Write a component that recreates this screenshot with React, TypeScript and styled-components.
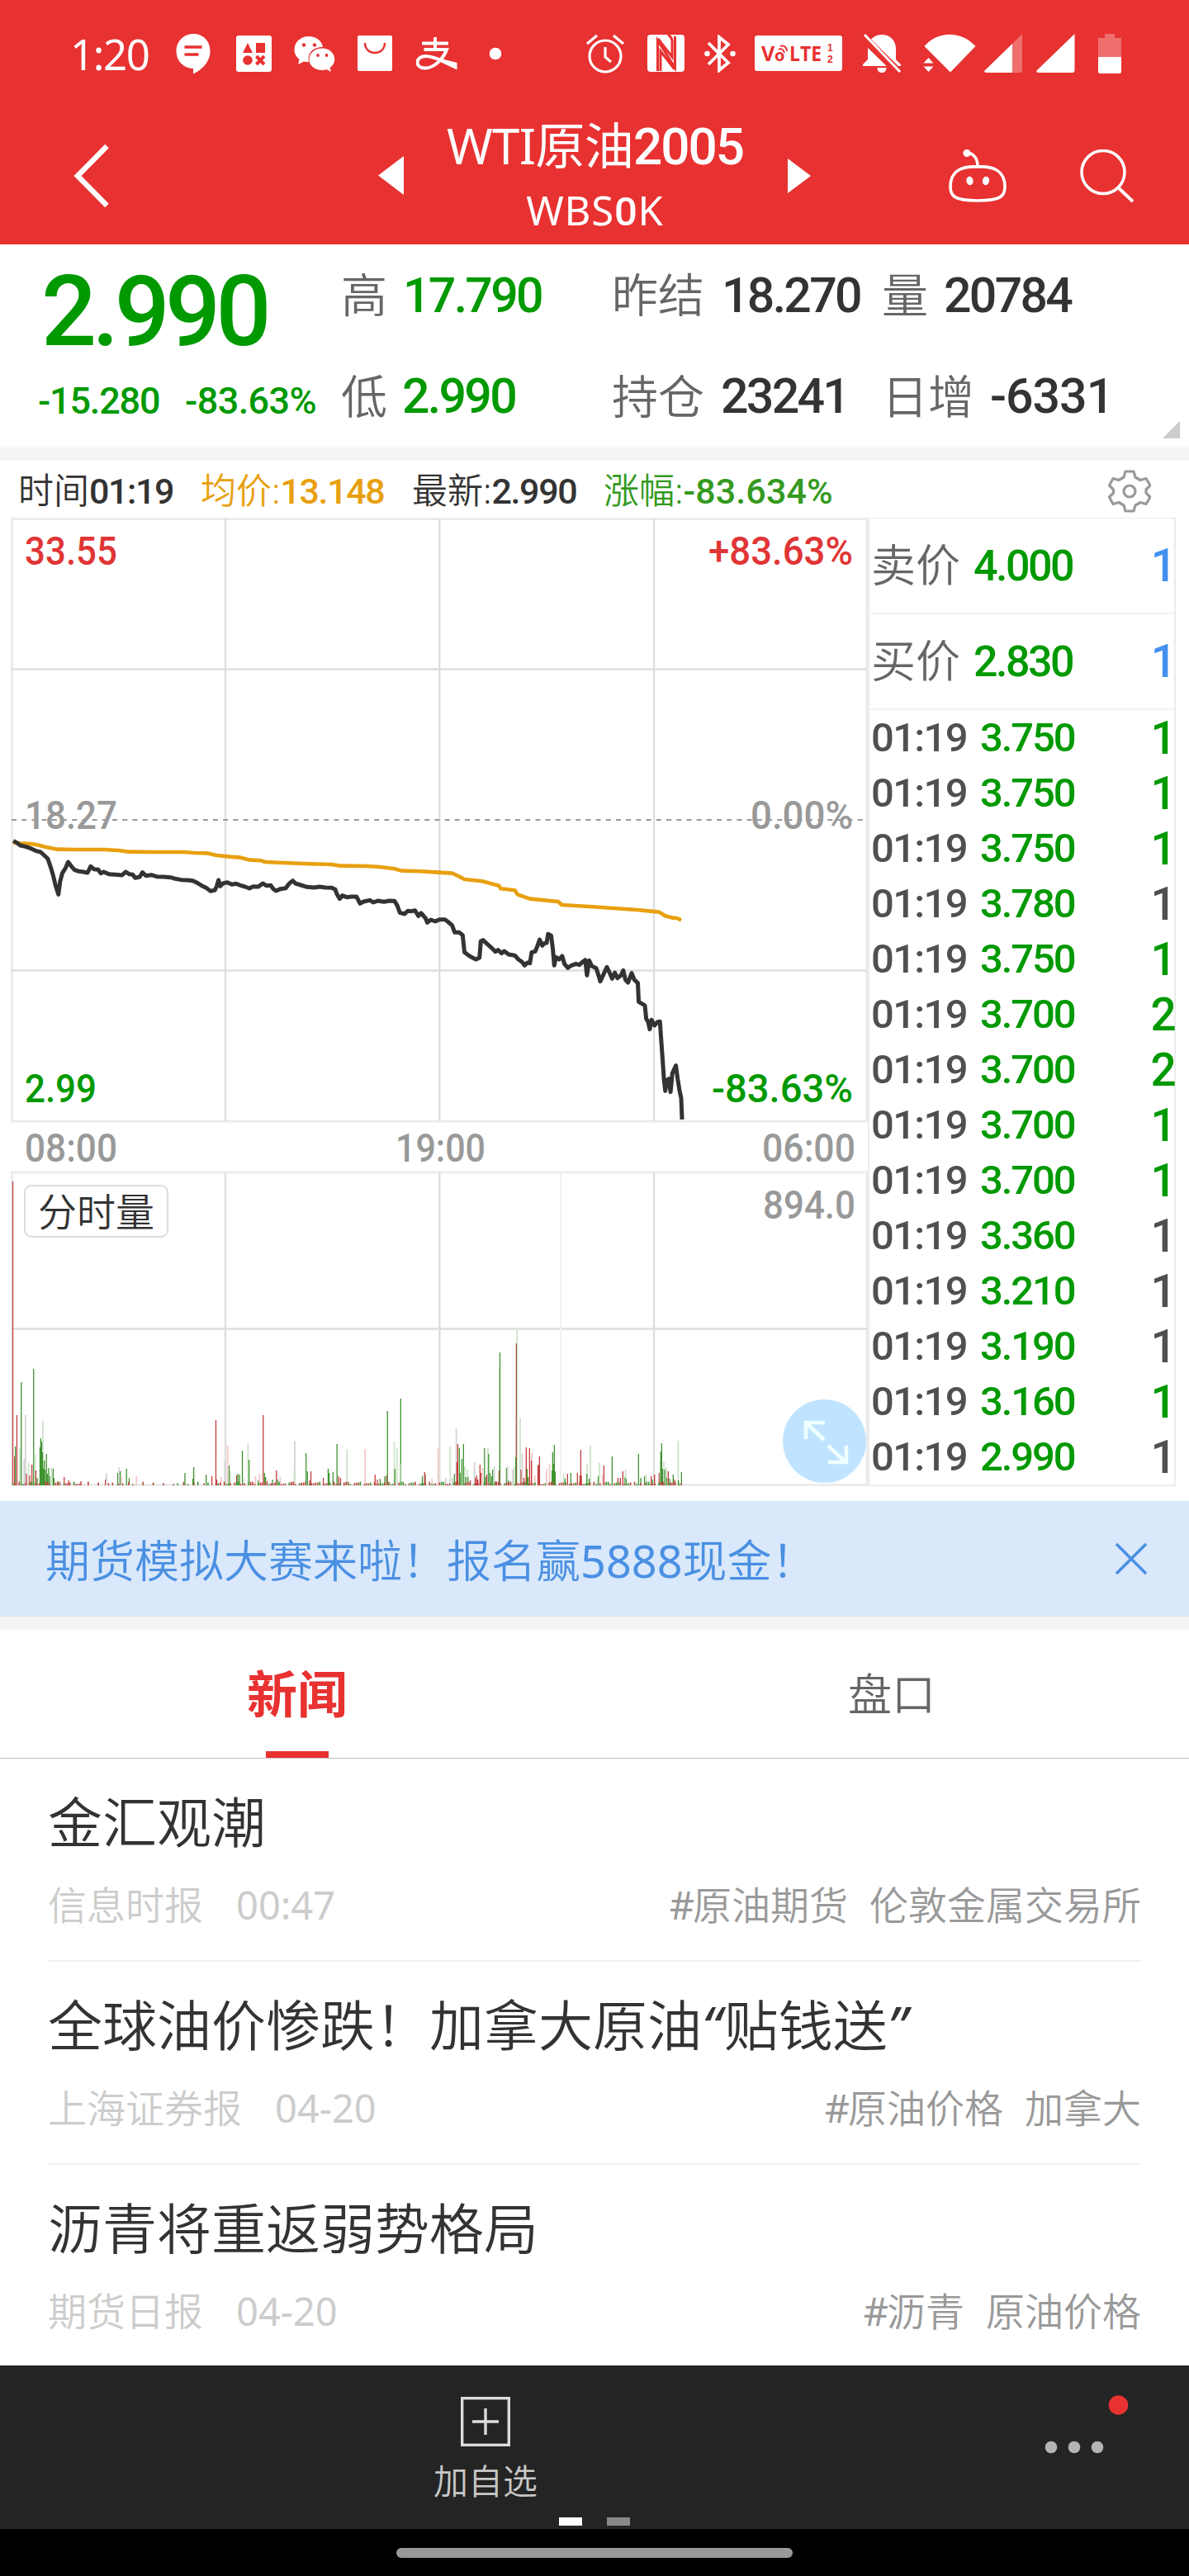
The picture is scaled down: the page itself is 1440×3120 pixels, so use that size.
import React from "react";
import styled, { createGlobalStyle } from "styled-components";

const GREEN = "#009900";
const RED = "#e83131";
const CJK = '"Noto Sans", "Noto Sans CJK SC", sans-serif';
const DIGITS = 'Roboto, "Noto Sans CJK SC", sans-serif';

const GlobalStyle = createGlobalStyle`
  * { box-sizing: border-box; }
  body { margin: 0; background: #fff; }
  svg { display: block; }
`;

const Screen = styled.div`
  width: 1440px;
  height: 3120px;
  overflow: hidden;
  display: flex;
  flex-direction: column;
  background: #fff;
  font-family: ${CJK};
  font-weight: 350;
  color: #333;
  white-space: nowrap;
`;

/* ---------- header ---------- */

const Header = styled.header`
  height: 296px;
  background: ${RED};
  color: #fff;
`;

const StatusBar = styled.div`
  height: 129px;
  padding-left: 85px;
  display: flex;
  align-items: center;
`;

const Clock = styled.span`
  width: 128px;
  font-family: "Noto Sans", sans-serif;
  font-weight: 400;
  font-size: 51px;
  letter-spacing: -1.4px;
`;

const StatusIcon = styled.svg<{ $gap: number }>`
  flex: none;
  margin-right: ${(p) => p.$gap}px;
`;

const TitleBar = styled.div`
  height: 167px;
  display: grid;
  grid-template-columns: 458px 524px 158px 233px;
  align-items: center;
`;

const BackIcon = styled.svg`
  margin-left: 86px;
`;

const Switcher = styled.div`
  display: flex;
  align-items: center;
  justify-content: space-between;
`;

const Titles = styled.div`
  display: flex;
  flex-direction: column;
  align-items: center;
  margin: 1px 2px 0 0;
`;

const Title = styled.h1`
  margin: 0;
  font-family: ${CJK};
  font-weight: 400;
  font-size: 60px;
  line-height: 82px;
  letter-spacing: -0.7px;
`;

const TitleDigits = styled.span`
  font-family: ${DIGITS};
  font-weight: 500;
  font-size: 62px;
  letter-spacing: -2px;
`;

const Symbol = styled.div`
  font-family: ${CJK};
  font-weight: 400;
  font-size: 49px;
  line-height: 70px;
  letter-spacing: 0.8px;
`;

const SymbolDigit = styled.span`
  font-family: ${DIGITS};
  font-weight: 500;
`;

const HeaderAction = styled.div`
  display: flex;
  justify-content: flex-end;
  padding-top: 3px;
`;

/* ---------- quote ---------- */

const Quote = styled.section`
  position: relative;
  height: 246px;
  display: flex;
`;

const LastPrice = styled.div`
  width: 413px;
  padding-left: 46px;
  color: ${GREEN};
  font-family: ${DIGITS};
  font-weight: 500;
`;

const Big = styled.div`
  padding-left: 4px;
  font-size: 118px;
  line-height: 165px;
  letter-spacing: -5.6px;
`;

const Change = styled.div`
  display: flex;
  font-size: 45px;
  line-height: 50px;
  letter-spacing: -1.2px;
`;

const ChangeCell = styled.span<{ $w: number }>`
  width: ${(p) => p.$w}px;
  &:last-child { letter-spacing: -0.6px; }
`;

const Stats = styled.div`
  display: grid;
  grid-template-columns: 328px 327px 340px;
  grid-template-rows: 122px 123px;
`;

const Stat = styled.div`
  display: flex;
  align-items: center;
`;

const StatLabel = styled.span<{ $w: number }>`
  width: ${(p) => p.$w}px;
  color: #666;
  font-size: 56px;
  line-height: 80px;
  padding-bottom: 2px;
`;

const StatValue = styled.span<{ $green?: boolean; $tracking?: number }>`
  font-family: ${DIGITS};
  font-weight: 500;
  font-size: 59px;
  letter-spacing: ${(p) => p.$tracking ?? -2.7}px;
  color: ${(p) => (p.$green ? GREEN : "#333")};
`;

const ExpandCorner = styled.svg`
  position: absolute;
  right: 11px;
  bottom: 11px;
`;

const Spacer = styled.div<{ $h: number }>`
  height: ${(p) => p.$h}px;
  background: #f4f4f4;
`;

/* ---------- chart ---------- */

const InfoRow = styled.div`
  height: 69px;
  padding: 0 46px 0 22px;
  display: flex;
  align-items: center;
  font-size: 43px;
  line-height: 62px;
`;

const Info = styled.span<{ $w: number; $color: string }>`
  width: ${(p) => p.$w}px;
  margin-top: 4px;
  color: ${(p) => p.$color};
`;

const InfoNum = styled.span<{ $tracking?: number }>`
  font-family: ${DIGITS};
  font-weight: 500;
  letter-spacing: ${(p) => p.$tracking ?? -1.4}px;
`;

const Gear = styled.svg`
  margin: 4px 0 0 auto;
`;

const Market = styled.section`
  height: 1191px;
  padding-left: 13px;
  display: flex;
  align-items: flex-start;
`;

const ChartArea = styled.div`
  position: relative;
  width: 1038px;
  height: 1173px;
`;

const ChartText = styled.text`
  font-family: ${DIGITS};
  font-weight: 500;
  font-size: 48px;
`;

const VolumeButton = styled.button`
  position: absolute;
  left: 16px;
  top: 808px;
  width: 175px;
  height: 64px;
  padding: 0;
  border: 2px solid #ddd;
  border-radius: 9px;
  background: #fff;
  color: #333;
  font: 350 47px/60px ${CJK};
`;

const FullscreenButton = styled.div`
  position: absolute;
  left: 935px;
  top: 1068px;
  width: 101px;
  height: 101px;
  border-radius: 50%;
  background: #c0e4ff;
`;

const Tape = styled.div`
  width: 373px;
  height: 1173px;
  border: 1px solid #ececec;
  border-width: 1px 2px 2px 2px;
  font-family: ${DIGITS};
  font-weight: 500;
`;

const BookRow = styled.div`
  height: 116px;
  padding-left: 2px;
  display: flex;
  align-items: center;
  border-bottom: 2px solid #f2f2f2;
`;

const BookLabel = styled.span`
  width: 124px;
  padding-bottom: 2px;
  font-family: ${CJK};
  font-weight: 350;
  font-size: 54px;
  line-height: 80px;
  color: #666;
`;

const BookPrice = styled.span`
  font-size: 52px;
  letter-spacing: -2.5px;
  color: ${GREEN};
`;

const Lots = styled.span<{ $color: string }>`
  margin: 0 -3px 0 auto;
  font-size: 55px;
  color: ${(p) => p.$color};
`;

const TradeRow = styled.div`
  height: 67px;
  padding: 0 2px 0 2px;
  display: flex;
  align-items: center;
  font-size: 49px;
  letter-spacing: -1.7px;
`;

const TradeTime = styled.span`
  width: 132px;
  color: #505050;
`;

const TradePrice = styled.span`
  color: ${GREEN};
  letter-spacing: -2.1px;
`;

/* ---------- banner, tabs, news ---------- */

const Latin = styled.span`
  font-weight: 400;
`;

const QuoteMark = styled.span`
  font-weight: 400;
  font-style: italic;
  letter-spacing: 3px;
`;

const Hash = styled.span`
  font-weight: 400;
  letter-spacing: -2px;
`;

const Banner = styled.div`
  height: 140px;
  padding: 0 50px 0 55px;
  display: flex;
  align-items: center;
  justify-content: space-between;
  background: #d9e8fb;
  color: #4a90e2;
  font-size: 54px;
`;

const BannerText = styled.span`
  line-height: 80px;
  padding-top: 3px;
`;

const Tabs = styled.nav`
  height: 156px;
  display: grid;
  grid-template-columns: 1fr 1fr;
  border-bottom: 1px solid #c0c0c0;
`;

const Tab = styled.div<{ $active?: boolean }>`
  display: flex;
  flex-direction: column;
  align-items: center;
  justify-content: space-between;
  font-size: ${(p) => (p.$active ? 61 : 53)}px;
  font-weight: ${(p) => (p.$active ? 700 : 350)};
  color: ${(p) => (p.$active ? RED : "#666")};
  line-height: 156px;
  &::after {
    content: "";
    width: 76px;
    height: 8px;
    margin-top: -9px;
    background: ${(p) => (p.$active ? RED : "transparent")};
  }
`;

const NewsList = styled.div`
  height: 735px;
  padding: 0 58px;
`;

const NewsItem = styled.article`
  height: 246px;
  padding-top: 28px;
  border-bottom: 2px solid #f0f0f0;
  &:last-child { border-bottom: 0; }
`;

const NewsTitle = styled.h2`
  margin: 0;
  font-size: 66px;
  font-weight: 350;
  line-height: 96px;
  color: #333;
`;

const NewsMeta = styled.div`
  display: flex;
  font-size: 47px;
  line-height: 66px;
  margin-top: 20px;
  color: #ccc;
`;

const NewsTime = styled(Latin)`
  margin-left: 40px;
`;

const NewsTags = styled.span`
  margin-left: auto;
  display: flex;
  gap: 26px;
  color: #999;
`;

/* ---------- bottom ---------- */

const BottomBar = styled.footer`
  height: 198px;
  background: #242424;
`;

const BottomItems = styled.div`
  height: 184px;
  display: grid;
  grid-template-columns: 1176px 248px;
`;

const AddItem = styled.div`
  display: flex;
  flex-direction: column;
  align-items: center;
  padding-top: 38px;
  font-size: 42px;
  line-height: 60px;
  color: #c8c8c8;
`;

const AddLabel = styled.span`
  margin-top: 12px;
`;

const MoreIcon = styled.svg`
  margin: 30px 0 0 88px;
`;

const Pages = styled.div`
  display: flex;
  justify-content: center;
  gap: 30px;
`;

const Page = styled.span<{ $on?: boolean }>`
  width: 28px;
  height: 10px;
  background: ${(p) => (p.$on ? "#fff" : "#888")};
`;

const HomeArea = styled.div`
  height: 57px;
  padding-top: 23px;
  background: #000;
`;

const HomeBar = styled.div`
  width: 480px;
  height: 12px;
  margin: 0 auto;
  border-radius: 6px;
  background: #999;
`;

/* ---------- data ---------- */

const trades: [string, string, boolean][] = [
  ["3.750", "1", true],
  ["3.750", "1", true],
  ["3.750", "1", true],
  ["3.780", "1", false],
  ["3.750", "1", true],
  ["3.700", "2", true],
  ["3.700", "2", true],
  ["3.700", "1", true],
  ["3.700", "1", true],
  ["3.360", "1", false],
  ["3.210", "1", false],
  ["3.190", "1", false],
  ["3.160", "1", true],
  ["2.990", "1", false],
];

const news = [
  { title: "金汇观潮", source: "信息时报", time: "00:47", tags: ["#原油期货", "伦敦金属交易所"] },
  { title: "全球油价惨跌！加拿大原油“贴钱送”", source: "上海证券报", time: "04-20", tags: ["#原油价格", "加拿大"] },
  { title: "沥青将重返弱势格局", source: "期货日报", time: "04-20", tags: ["#沥青", "原油价格"] },
];

const volumeColors: Record<string, string> = {
  r: "#c43c3c",
  g: "#3f9430",
  G: "#cde3c9",
  R: "#f3c9c9",
  k: "#d4d4d4",
  b: "#a85440",
};

/* x, height, colour key */
const volumes: [number, number, string][] = [
  [15.5, 368, "r"], [17.7, 35, "r"], [18.6, 47, "g"], [20.4, 85, "r"], [23.6, 45, "G"], [25.7, 125, "g"],
  [28.9, 32, "k"], [30.5, 85, "k"], [32, 14, "r"], [34.3, 28, "G"], [36, 12, "r"], [38.6, 25, "r"], [40.7, 141, "g"],
  [42.2, 38, "G"], [43.4, 18, "r"], [45, 9, "g"], [48.4, 46, "g"], [49.3, 57, "g"], [50.4, 53, "g"], [51.6, 78, "G"],
  [51.4, 40, "g"], [52.4, 20, "g"], [53.6, 30, "g"], [54.8, 19, "g"], [56.2, 38, "g"], [57.4, 14, "g"], [58.9, 21, "g"],
  [60, 11, "g"], [62.1, 22, "G"], [64.3, 20, "g"], [65.3, 9, "g"], [70, 5, "g"], [77.7, 10, "r"], [83, 6, "r"],
  [98, 5, "r"], [127.6, 7, "r"], [128.6, 15, "k"], [142.5, 15, "g"], [144, 22, "k"], [145.7, 17, "g"], [147, 9, "R"],
  [153.2, 20, "g"], [156.4, 9, "g"], [165, 11, "R"], [223.9, 15, "g"], [234.6, 22, "g"], [233.6, 8, "g"],
  [249.6, 13, "g"], [256.6, 11, "r"], [261.4, 79, "r"], [262.4, 7, "r"], [267.5, 10, "R"], [272.1, 29, "k"],
  [275.3, 48, "R"], [277.5, 24, "g"], [278.6, 17, "G"], [286.6, 12, "r"], [287.9, 14, "g"], [290, 13, "g"],
  [293.5, 42, "g"], [295, 8, "G"], [300, 51, "G"], [301.6, 31, "g"], [309, 11, "R"], [312.6, 6, "g"], [314, 14, "R"],
  [318.7, 85, "r"], [320.3, 15, "g"], [321.6, 10, "g"], [323.4, 5, "r"], [330, 7, "g"], [334.8, 18, "r"],
  [336, 7, "g"], [339, 10, "R"], [356.7, 54, "k"], [356.2, 21, "G"], [370.6, 39, "g"], [372.3, 17, "g"],
  [375, 6, "r"], [376.5, 17, "r"], [391.5, 9, "r"], [397.4, 20, "g"], [398.6, 15, "g"], [403.3, 16, "g"],
  [408.1, 50, "g"], [410, 11, "r"], [412.4, 9, "r"], [419.9, 44, "G"], [441.9, 44, "R"], [454.2, 13, "r"],
  [457, 7, "r"], [460.4, 8, "g"], [466, 11, "g"], [469.2, 90, "g"], [468.2, 12, "b"], [477.2, 53, "G"],
  [478.3, 20, "g"], [480.5, 45, "G"], [485.3, 105, "g"], [484.3, 26, "G"], [511.5, 11, "g"], [514.2, 16, "r"],
  [515, 13, "b"], [523, 8, "R"], [530.3, 45, "R"], [539.5, 9, "k"], [545, 47, "G"], [547.7, 9, "k"], [550.3, 14, "g"],
  [552.3, 69, "k"], [553.3, 28, "r"], [554.3, 50, "r"], [556.3, 45, "g"], [557.3, 15, "g"], [559.3, 32, "g"],
  [561.3, 50, "g"], [562.7, 23, "G"], [564, 10, "g"], [565.7, 19, "G"], [566.7, 10, "g"], [569.5, 6, "r"],
  [574.3, 28, "k"], [575.6, 9, "r"], [577.3, 12, "r"], [578.6, 7, "r"], [581.3, 25, "r"], [582.3, 15, "r"],
  [584, 21, "R"], [586.7, 45, "g"], [588, 10, "g"], [590.7, 45, "G"], [589.5, 13, "r"], [591.7, 38, "g"],
  [593.4, 15, "g"], [595.3, 11, "g"], [596.7, 19, "g"], [598.3, 23, "k"], [600.4, 5, "r"], [604.6, 143, "G"],
  [605.4, 161, "g"], [604.4, 18, "b"], [613.3, 21, "g"], [614.4, 23, "k"], [616, 6, "g"], [620.7, 19, "k"],
  [622.3, 22, "G"], [626, 189, "G"], [625.3, 172, "b"], [624.6, 34, "g"], [629.7, 82, "G"], [631, 19, "r"],
  [632.3, 39, "k"], [634.5, 9, "r"], [636.6, 23, "R"], [637.3, 46, "r"], [638.3, 20, "g"], [639.5, 10, "g"],
  [641.3, 45, "r"], [643.7, 39, "R"], [643.5, 30, "r"], [647.5, 12, "R"], [651.5, 24, "r"], [652.3, 25, "r"],
  [653.3, 35, "r"], [661.7, 20, "R"], [665.3, 26, "R"], [668.6, 18, "g"], [669.3, 40, "g"], [670.3, 26, "g"],
  [671.3, 49, "g"], [672.4, 17, "g"], [682.3, 14, "G"], [684.3, 8, "g"], [687.3, 14, "r"], [691.3, 15, "g"],
  [699.3, 15, "r"], [702.4, 12, "b"], [703.3, 43, "r"], [704, 12, "r"], [711, 26, "G"], [710.6, 14, "g"],
  [714.7, 48, "G"], [713.5, 8, "g"], [724.5, 11, "g"], [725.7, 27, "G"], [729.4, 13, "R"], [731.3, 24, "r"],
  [741.3, 35, "g"], [748.3, 9, "r"], [751.3, 9, "r"], [754.3, 17, "r"], [756.6, 10, "g"], [757.3, 19, "G"],
  [758.3, 8, "g"], [773.3, 38, "g"], [776, 9, "g"], [780.5, 11, "g"], [782, 13, "G"], [788.7, 11, "r"],
  [790, 7, "g"], [792.7, 13, "r"], [798.3, 15, "r"], [799.4, 30, "G"], [800.3, 41, "g"], [801.3, 51, "g"],
  [802.3, 20, "g"], [803.7, 28, "G"], [805, 19, "g"], [806.7, 22, "G"], [807.5, 9, "g"], [809.3, 17, "r"],
  [811, 8, "g"], [815.3, 13, "g"], [817, 7, "r"], [821, 54, "G"], [821.6, 6, "g"], [825.3, 16, "g"],
];

/* low-volume minutes: thin ticks along the baseline */
const ticks = Array.from({ length: 330 }, (_, i) => {
  const n = (i * 7919 + 13) % 101;
  const x = 15 + i * 2.46;
  const quiet = x > 100 && x < 262;
  return { x, h: 1.6 + (n % 4) * 0.9, c: n % 3 === 0 ? "r" : n % 3 === 1 ? "g" : "b", on: quiet ? n < 30 : n < 82 };
}).filter((t) => t.on);

const priceLine =
  "30,175 38,182 46,192 58,196 70,203 82,212 92,216 100,228 108,240 114,268 120,300 126,340 132,370 136,322 141,292 148,275 154,252 160,265 168,280 178,286 188,288 198,291 205,268 212,278 222,280 228,293 234,288 246,296 260,298 276,300 284,288 292,296 300,298 306,310 316,306 322,290 330,302 342,299 354,305 370,306 386,308 396,313 410,317 424,318 436,320 446,328 456,338 466,346 476,358 486,354 490,340 494,318 498,340 504,330 514,326 524,334 534,331 544,337 554,342 564,348 572,341 584,342 594,330 602,338 612,337 618,350 624,357 634,350 646,347 654,330 662,320 668,330 680,336 694,343 710,345 722,342 736,345 750,346 758,352 762,370 768,386 774,374 784,380 794,378 806,378 814,403 822,396 836,391 844,399 854,393 868,397 880,393 892,394 898,410 904,436 914,441 922,430 930,431 938,428 946,448 952,438 962,456 966,472 974,462 984,468 994,461 1006,461 1014,471 1022,482 1028,508 1038,508 1046,518 1050,580 1058,590 1066,598 1076,606 1084,600 1087,540 1092,536 1100,548 1110,562 1120,578 1126,572 1134,584 1140,576 1150,588 1164,592 1172,606 1180,615 1186,628 1192,618 1198,620 1202,580 1210,577 1214,562 1220,534 1226,556 1230,548 1236,546 1239,514 1246,520 1250,570 1253,628 1257,598 1264,606 1271,594 1276,622 1284,637 1292,628 1302,622 1310,626 1318,614 1323,608 1327,664 1332,610 1338,630 1348,638 1354,668 1357,686 1364,662 1372,634 1378,654 1384,676 1390,654 1396,674 1404,664 1409,646 1414,680 1420,690 1428,656 1434,680 1442,692 1444,760 1452,768 1458,774 1461,822 1465,832 1469,860 1473,826 1480,846 1486,834 1492,832 1494,880 1498,970 1501,1040 1504,1084 1508,1046 1512,1040 1516,1088 1520,1020 1524,1006 1528,992 1532,1040 1536,1080 1540,1110 1542,1188";

const averageLine =
  "30,182 46,184 70,186 84,190 104,198 130,206 170,207 236,207 268,210 292,215 350,216 414,216 440,219 468,220 490,228 520,233 544,236 566,245 590,247 600,252 640,255 700,259 750,261 770,266 830,267 858,270 890,276 908,284 950,286 990,290 1022,293 1036,303 1050,315 1090,322 1128,338 1132,349 1164,355 1170,370 1198,386 1262,396 1270,408 1340,415 1440,426 1490,434 1504,448 1520,455 1530,456 1540,463";

const Label = (p: { x: number; y: number; w: number; fill: string; children: string }) => (
  <ChartText x={p.x} y={p.y} textLength={p.w} lengthAdjust="spacingAndGlyphs" fill={p.fill}>
    {p.children}
  </ChartText>
);

/* sets Latin digits, hashes and curly quotes apart from the Chinese text around them */
function mixed(text: string) {
  return text.split(/([0-9]+|[“”#])/).map((part, i) => {
    if (/^[0-9]/.test(part)) return <Latin key={i}>{part}</Latin>;
    if (part === "#") return <Hash key={i}>{part}</Hash>;
    if (part === "“" || part === "”") return <QuoteMark key={i}>{part}</QuoteMark>;
    return part;
  });
}

function Chart() {
  return (
    <svg width="1038" height="1173" viewBox="13 627 1038 1173">
      <g stroke="#ececec" strokeWidth="3">
        <path d="M13 628.5H1051M13 1358H1051M13 1420H1051M13 1798.5H1051" />
        <path d="M14.5 628V1358M1050 628V1358M14.5 1420V1799M1050 1420V1799" />
      </g>
      <g stroke="#dedede" strokeWidth="2.400">
        <path d="M14 810.5H1050M14 1175.5H1050M14 1609.5H1050" />
        <path d="M273 628V1358M532.3 628V1358M792 628V1358M273 1420V1799M532.3 1420V1799M792 1420V1799" />
        <path d="M679 1420V1799" stroke="#f1f1f1" strokeWidth="2" />
      </g>
      <path d="M14 993H1050" stroke="#999" strokeWidth="2" strokeDasharray="6 6.2" />
      <Label x={30} y={684} w={112} fill="#e03535">33.55</Label>
      <Label x={858} y={684} w={175} fill="#e03535">+83.63%</Label>
      <Label x={30} y={1004} w={112} fill="#999">18.27</Label>
      <Label x={909} y={1004} w={124} fill="#999">0.00%</Label>
      <Label x={30} y={1335} w={87} fill={GREEN}>2.99</Label>
      <Label x={862} y={1335} w={171} fill={GREEN}>-83.63%</Label>
      <Label x={30} y={1407} w={112} fill="#999">08:00</Label>
      <Label x={479} y={1407} w={109} fill="#999">19:00</Label>
      <Label x={923} y={1407} w={113} fill="#999">06:00</Label>
      <Label x={924} y={1476} w={112} fill="#999">894.0</Label>
      <g transform="translate(0 960) scale(0.5357 0.3333)" fill="none" strokeLinejoin="round">
        <polyline points={averageLine} stroke="#e8a010" strokeWidth="4.600" vectorEffect="non-scaling-stroke" />
        <polyline points={priceLine} stroke="#333" strokeWidth="5" vectorEffect="non-scaling-stroke" />
      </g>
      <g>
        {volumes.map(([x, h, c], i) => (
          <rect key={i} x={x - 0.6} y={1799 - h} width={c === "k" || c === "G" || c === "R" ? 1.8 : 1.3} height={h} fill={volumeColors[c]} />
        ))}
        {ticks.map((t, i) => (
          <rect key={i} x={t.x} y={1799 - t.h} width="1.6" height={t.h} fill={volumeColors[t.c]} />
        ))}
      </g>
    </svg>
  );
}

function StatusIcons() {
  return (
    <>
      <StatusIcon $gap={31} width="42" height="50" viewBox="0 0 42 50">
        <path fill="#fff" d="M21 1C9.500 1 .5 10 .5 22S9 42.500 21 43v6.500C31 45 41.500 35 41.500 22S32.500 1 21 1Z" />
        <path stroke={RED} strokeWidth="3.600" d="M10.500 17h21M10.500 26h17" />
      </StatusIcon>
      <StatusIcon $gap={27} width="43" height="44" viewBox="0 0 43 44">
        <rect width="43" height="44" rx="3" fill="#fff" />
        <path fill={RED} d="M14 9l6 12H8zM24 9h11v12H24z" />
        <circle cx="14" cy="30" r="5.800" fill={RED} />
        <path stroke={RED} strokeWidth="4" d="M24.500 25l9.500 10M34 25l-9.500 10" />
      </StatusIcon>
      <StatusIcon $gap={27} width="50" height="44" viewBox="0 0 50 44">
        <path fill="#fff" d="M18 1C8 1 .5 8 .5 17c0 5 2.500 9 6 12l-1.500 6 7-3.500c2 .6 4 .8 6 .8C16 21 23 14 35 14 33.500 6 26.500 1 18 1Z" />
        <path fill="#fff" d="M34 15.500c-9 0-15.500 6-15.500 13.500S25 42 34 42c2 0 4-.4 5.500-1l5.500 3-1.500-5c3.500-2.500 5.800-6 5.800-10C49.300 21.500 43 15.500 34 15.500Z" />
        <g fill={RED}>
          <circle cx="12" cy="11.500" r="2.200" /><circle cx="25" cy="11.500" r="2.200" />
          <circle cx="29" cy="24" r="1.900" /><circle cx="39.500" cy="24" r="1.900" />
        </g>
      </StatusIcon>
      <StatusIcon $gap={29} width="42" height="43" viewBox="0 0 42 43">
        <rect width="42" height="43" rx="2" fill="#fff" />
        <path fill="none" stroke={RED} strokeWidth="2.400" d="M9 9c0 7 5 12 12 12s12-5 12-12" />
      </StatusIcon>
      <StatusIcon $gap={38} width="50" height="42" viewBox="0 0 50 42">
        <path fill="none" stroke="#fff" strokeWidth="4" d="M7 8.500h32M23 1v14M9.500 16H37C33 27 22 38.500 11 38.500c-6 0-9.500-3-9.500-7 0-4 4-7.500 10-7.500C20 24 30 29 41 33" />
        <path fill="#fff" d="M30 27L49.500 32v8.500L27 30z" />
      </StatusIcon>
      <StatusIcon $gap={101} width="16" height="16" viewBox="0 0 16 16">
        <circle cx="8" cy="8" r="7.300" fill="#fff" />
      </StatusIcon>
      <StatusIcon $gap={27} width="48" height="48" viewBox="0 0 48 48" fill="none" stroke="#fff" strokeWidth="3.200">
        <circle cx="24" cy="27" r="19" />
        <path d="M2 12L14 2M46 12L34 2M24 16v12l7 6" />
      </StatusIcon>
      <StatusIcon $gap={24} width="45" height="45" viewBox="0 0 45 45">
        <rect width="45" height="45" rx="4" fill="#fff" />
        <path fill="none" stroke={RED} strokeWidth="3" d="M12.500 44V7L33.500 40V2M16 44V20L33 42M13 5L30 27V8c0-4-2-6-5-8" />
      </StatusIcon>
      <StatusIcon $gap={23} width="38" height="46" viewBox="0 0 38 46">
        <path fill="none" stroke="#fff" strokeWidth="3.800" d="M5 10l24 24-11 9V3l11 9L5 36" />
        <circle cx="3.500" cy="23" r="3.300" fill="#fff" /><circle cx="34.500" cy="23" r="3.300" fill="#fff" />
      </StatusIcon>
      <StatusIcon $gap={25} width="106" height="43" viewBox="0 0 106 43">
        <rect width="106" height="43" rx="3" fill="#fff" />
        <g fill={RED} fontFamily="Open Sans, sans-serif" fontWeight="700">
          <text x="8" y="31" fontSize="25">V</text>
          <text x="24" y="31" fontSize="20">o</text>
          <text x="42" y="31" fontSize="25" textLength="39" lengthAdjust="spacingAndGlyphs">LTE</text>
          <text x="88" y="19" fontSize="12" fontFamily="Liberation Sans, sans-serif">1</text>
          <text x="88" y="33" fontSize="12" fontFamily="Liberation Sans, sans-serif">2</text>
        </g>
        <path fill="none" stroke={RED} strokeWidth="2" d="M29 17c3-2 6 0 7 4M31 13c5-2 8 2 8 6" />
      </StatusIcon>
      <StatusIcon $gap={26} width="47" height="48" viewBox="0 0 47 48">
        <path fill="#fff" d="M23 1c9 0 17 6 17 17v13l6 6v2H0v-2l6-6V18C6 7 14 1 23 1ZM17.500 41h11c0 4-2.500 6-5.500 6s-5.500-2-5.500-6Z" />
        <path stroke={RED} strokeWidth="10" d="M-3 1L46 49" />
        <path stroke="#fff" strokeWidth="3" d="M2 1L45 46" />
      </StatusIcon>
      <StatusIcon $gap={10} width="64" height="47" viewBox="0 0 64 47">
        <path fill="#fff" d="M1.500 15C18-4 46-4 63.500 15L33 46.500ZM6.500 29l6 6.500H0.500zM6.500 46l6-6.500H0.500z" />
      </StatusIcon>
      <StatusIcon $gap={16} width="47" height="47" viewBox="0 0 47 47">
        <path fill="#fff" fillOpacity=".3" d="M34 12L46 0v44q0 3-3 3H34z" />
        <path fill="#fff" d="M34 12v35H2q-3-1-1-3z" />
      </StatusIcon>
      <StatusIcon $gap={28} width="47" height="47" viewBox="0 0 47 47">
        <path fill="#fff" d="M46.500 0v44q0 3-3 3H2q-3-1-1-3z" />
      </StatusIcon>
      <StatusIcon $gap={0} width="28" height="48" viewBox="0 0 28 48">
        <path fill="#fff" fillOpacity=".3" d="M8 0h12v5h8v23H0V5h8z" />
        <path fill="#fff" d="M0 28h28v18q0 2-2 2H2q-2 0-2-2z" />
      </StatusIcon>
    </>
  );
}

const stats: { label: string; value: string; w: number; green?: boolean; tracking?: number }[] = [
  { label: "高", value: "17.790", w: 75, green: true },
  { label: "昨结", value: "18.270", w: 133 },
  { label: "量", value: "20784", w: 75 },
  { label: "低", value: "2.990", w: 74, green: true },
  { label: "持仓", value: "23241", w: 132 },
  { label: "日增", value: "-6331", w: 131, tracking: -1 },
];

export default function App() {
  return (
    <Screen>
      <GlobalStyle />
      <Header>
        <StatusBar>
          <Clock>1:20</Clock>
          <StatusIcons />
        </StatusBar>
        <TitleBar>
          <BackIcon width="50" height="80" viewBox="0 0 50 80" fill="none" stroke="#fff" strokeWidth="6.500">
            <path d="M43.500 4L8 40l35.500 36" />
          </BackIcon>
          <Switcher>
            <svg width="31" height="47" viewBox="0 0 31 47"><path fill="#fff" d="M31 0v47L0 23.500z" /></svg>
            <Titles>
              <Title>WTI原油<TitleDigits>2005</TitleDigits></Title>
              <Symbol>WBS<SymbolDigit>0</SymbolDigit>K</Symbol>
            </Titles>
            <svg width="28" height="42" viewBox="0 0 28 42"><path fill="#fff" d="M0 0v42l28-21z" /></svg>
          </Switcher>
          <HeaderAction />
          <HeaderAction>
            <svg width="224" height="66" viewBox="0 0 224 66" fill="none" stroke="#fff" strokeWidth="3.600">
              <path d="M35 21C14 20 2 27 2 45c0 11 4 17 33 17s33-6 33-17C68 27 56 20 35 21ZM23 4c7 1 12 7 12 16" />
              <ellipse cx="25.500" cy="38" rx="2.300" ry="3.500" fill="#fff" transform="rotate(-8 25.500 38)" />
              <ellipse cx="45" cy="38" rx="2.300" ry="3.500" fill="#fff" transform="rotate(8 45 38)" />
              <circle cx="22" cy="4.500" r="2.800" fill="#fff" />
              <circle cx="187" cy="27.500" r="26" />
              <path d="M205 46l18 17" strokeWidth="4" />
            </svg>
          </HeaderAction>
        </TitleBar>
      </Header>

      <Quote>
        <LastPrice>
          <Big>2.990</Big>
          <Change>
            <ChangeCell $w={178}>-15.280</ChangeCell>
            <ChangeCell $w={160}>-83.63%</ChangeCell>
          </Change>
        </LastPrice>
        <Stats>
          {stats.map((s) => (
            <Stat key={s.label}>
              <StatLabel $w={s.w}>{s.label}</StatLabel>
              <StatValue $green={s.green} $tracking={s.tracking}>{s.value}</StatValue>
            </Stat>
          ))}
        </Stats>
        <ExpandCorner width="21" height="21" viewBox="0 0 21 21"><path fill="#ccc" d="M21 0v21H0z" /></ExpandCorner>
      </Quote>
      <Spacer $h={16} />

      <InfoRow>
        <Info $w={221} $color="#333">时间<InfoNum>01:19</InfoNum></Info>
        <Info $w={256} $color="#e8a010">均价:<InfoNum>13.148</InfoNum></Info>
        <Info $w={232} $color="#333">最新:<InfoNum>2.990</InfoNum></Info>
        <Info $w={290} $color="#359a1f">涨幅:<InfoNum $tracking={0.1}>-83.634%</InfoNum></Info>
        <Gear width="52" height="52" viewBox="0 0 52 52" fill="none" stroke="#999" strokeWidth="3.200" strokeLinejoin="round">
          <path d="M21 2h10l2 7 6 3.500 7-2 5 8.500-5 5v4l5 5-5 8.500-7-2-6 3.500-2 7H21l-2-7-6-3.500-7 2L1.500 33l5-5v-4l-5-5L6 10.500l7 2L19 9z" />
          <circle cx="26" cy="26" r="7" />
        </Gear>
      </InfoRow>

      <Market>
        <ChartArea>
          <Chart />
          <VolumeButton>分时量</VolumeButton>
          <FullscreenButton>
            <svg width="101" height="101" viewBox="0 0 101 101" fill="none" stroke="#f0ffff" strokeWidth="4.500">
              <path d="M50 49L29 29M51 28H28v20M55 56l21 20M55 76h22V56" />
            </svg>
          </FullscreenButton>
        </ChartArea>
        <Tape>
          <BookRow>
            <BookLabel>卖价</BookLabel>
            <BookPrice>4.000</BookPrice>
            <Lots $color="#4390ee">1</Lots>
          </BookRow>
          <BookRow>
            <BookLabel>买价</BookLabel>
            <BookPrice>2.830</BookPrice>
            <Lots $color="#4390ee">1</Lots>
          </BookRow>
          {trades.map(([price, lots, up], i) => (
            <TradeRow key={i}>
              <TradeTime>01:19</TradeTime>
              <TradePrice>{price}</TradePrice>
              <Lots $color={up ? GREEN : "#505050"}>{lots}</Lots>
            </TradeRow>
          ))}
        </Tape>
      </Market>

      <Banner>
        <BannerText>{mixed("期货模拟大赛来啦！报名赢5888现金！")}</BannerText>
        <svg width="40" height="40" viewBox="0 0 40 40" stroke="#4a90e2" strokeWidth="3.600"><path d="M2 2l36 36M38 2L2 38" /></svg>
      </Banner>
      <Spacer $h={16} />
      <Tabs>
        <Tab $active>新闻</Tab>
        <Tab>盘口</Tab>
      </Tabs>
      <NewsList>
        {news.map((n) => (
          <NewsItem key={n.title}>
            <NewsTitle>{mixed(n.title)}</NewsTitle>
            <NewsMeta>
              <span>{n.source}</span>
              <NewsTime>{n.time}</NewsTime>
              <NewsTags>{n.tags.map((t) => <span key={t}>{mixed(t)}</span>)}</NewsTags>
            </NewsMeta>
          </NewsItem>
        ))}
      </NewsList>

      <BottomBar>
        <BottomItems>
          <AddItem>
            <svg width="60" height="60" viewBox="0 0 60 60" fill="none" stroke="#dcdcdc" strokeWidth="3.400">
              <rect x="1.700" y="1.700" width="56.600" height="56.600" />
              <path d="M30 14v32M14 30h32" />
            </svg>
            <AddLabel>加自选</AddLabel>
          </AddItem>
          <MoreIcon width="110" height="84" viewBox="0 0 110 84">
            <circle cx="90.500" cy="18" r="11.800" fill={RED} />
            <g fill="#b4b4b4">
              <circle cx="9" cy="69" r="7.300" /><circle cx="37" cy="69" r="7.300" /><circle cx="65" cy="69" r="7.300" />
            </g>
          </MoreIcon>
        </BottomItems>
        <Pages>
          <Page $on />
          <Page />
        </Pages>
      </BottomBar>
      <HomeArea>
        <HomeBar />
      </HomeArea>
    </Screen>
  );
}
